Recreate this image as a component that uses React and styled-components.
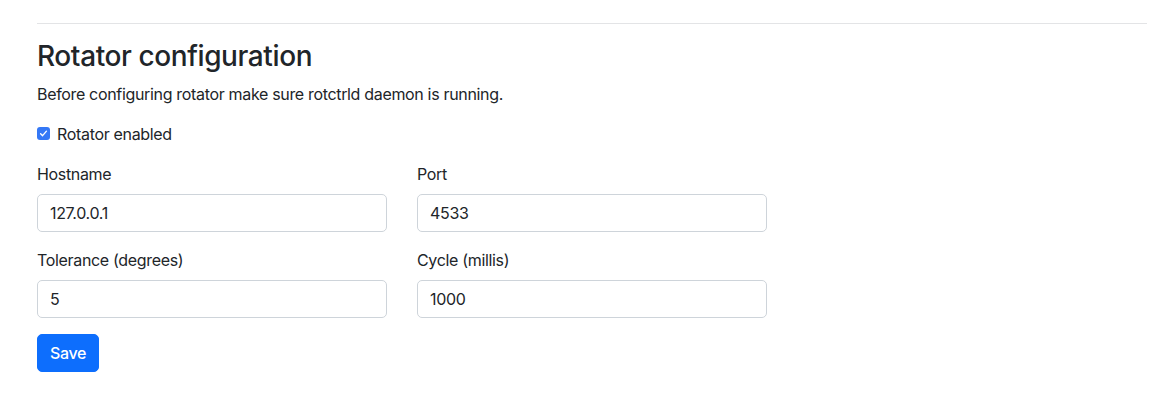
import React, { useState } from 'react';
import styled, { createGlobalStyle } from 'styled-components';

const Global = createGlobalStyle`
    body {
        margin: 0;
        background: #fff;
        color: #212529;
        font-family: Inter, "Liberation Sans", Arial, sans-serif;
        font-size: 16px;
        line-height: 1.5;
        letter-spacing: -0.33px;
    }
    * { box-sizing: border-box; }
`;

const Page = styled.div`
    width: 1110px;
    margin-left: 37px;
    padding-top: 23px;
`;

const Rule = styled.hr`
    margin: 0 0 16px;
    border: 0;
    border-top: 1px solid #e3e4e6;
`;

const Title = styled.h3`
    margin: 0 0 8px;
    font-size: 28px;
    font-weight: 500;
    line-height: 1.2;
    letter-spacing: -0.4px;
`;

const Lead = styled.p`
    margin: 0 0 16px;
`;

const Check = styled.label`
    display: flex;
    align-items: center;
    gap: 7px;
    margin-bottom: 16px;
    cursor: pointer;
`;

const Box = styled.span`
    display: inline-flex;
    align-items: center;
    justify-content: center;
    width: 13px;
    height: 13px;
    border-radius: 3px;
    background: ${p => (p.checked ? '#3478f6' : '#fff')};
    border: ${p => (p.checked ? 'none' : '1px solid #8a8f95')};
`;

const Grid = styled.div`
    display: grid;
    grid-template-columns: 350px 350px;
    column-gap: 30px;
`;

const Field = styled.div`
    margin-bottom: 16px;
`;

const Label = styled.label`
    display: block;
    margin-bottom: 8px;
`;

const Input = styled.input`
    display: block;
    width: 100%;
    height: 38px;
    padding: 6px 12px;
    font: inherit;
    letter-spacing: inherit;
    color: #212529;
    background: #fff;
    border: 1px solid #ced4da;
    border-radius: 5px;
    outline: none;
`;

const Button = styled.button`
    height: 38px;
    padding: 6px 12px;
    font: inherit;
    font-weight: 500;
    letter-spacing: inherit;
    color: #fff;
    background: #0d6efd;
    border: 1px solid #0d6efd;
    border-radius: 5px;
    cursor: pointer;
`;

const fields = [
    { id: 'hostname', label: 'Hostname', value: '127.0.0.1' },
    { id: 'port', label: 'Port', value: '4533' },
    { id: 'tolerance', label: 'Tolerance (degrees)', value: '5' },
    { id: 'cycle', label: 'Cycle (millis)', value: '1000' },
];

export default function App() {
    const [enabled, setEnabled] = useState(true);
    const [values, setValues] = useState(Object.fromEntries(fields.map(f => [f.id, f.value])));

    return (
        <Page>
            <Global />
            <Rule />
            <Title>Rotator configuration</Title>
            <Lead>Before configuring rotator make sure rotctrld daemon is running.</Lead>
            <Check onClick={() => setEnabled(!enabled)}>
                <Box checked={enabled}>
                    {enabled && (
                        <svg width="9" height="9" viewBox="0 0 10 10">
                            <path d="M1.8 5.2 L4 7.4 L8.3 2.4" fill="none" stroke="#fff" strokeWidth="1.5" strokeLinecap="round" strokeLinejoin="round" />
                        </svg>
                    )}
                </Box>
                Rotator enabled
            </Check>
            <Grid>
                {fields.map(f => (
                    <Field key={f.id}>
                        <Label htmlFor={f.id}>{f.label}</Label>
                        <Input
                            id={f.id}
                            value={values[f.id]}
                            onChange={e => setValues({ ...values, [f.id]: e.target.value })}
                        />
                    </Field>
                ))}
            </Grid>
            <Button>Save</Button>
        </Page>
    );
}
